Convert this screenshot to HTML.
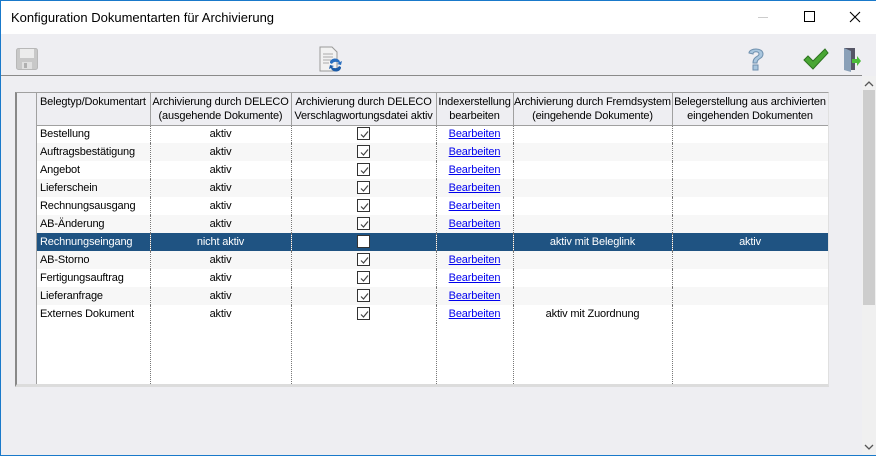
<!DOCTYPE html>
<html><head><meta charset="utf-8"><style>
*{margin:0;padding:0;box-sizing:border-box}
body{width:876px;height:456px;overflow:hidden;background:#eeeef2;font-family:"Liberation Sans",sans-serif;font-size:12px;color:#000;position:relative}
.abs{position:absolute}
#title{left:0;top:0;width:876px;height:34px;background:#fff;border-top:1px solid #1979ca}
#title span{position:absolute;left:11px;top:9px;font-size:13px}
#bl{left:0;top:0;width:1px;height:456px;background:#1979ca}
#bb{left:0;top:455px;width:876px;height:1px;background:#1979ca}
#sep{left:1px;top:75px;width:861px;height:1px;background:#8a8a8a}
#grid{left:15px;top:92px;width:814px;height:295px;background:#fff;border-left:2px solid #888;border-top:1px solid #a0a0a0;border-bottom:3px solid #dcdcdc;border-right:1px solid #e0e0e0;overflow:hidden}
table{position:absolute;left:20px;top:0;border-collapse:collapse;table-layout:fixed;width:791px;font-size:11px;letter-spacing:-0.15px}
td,th{height:18px;padding:0;white-space:nowrap;overflow:hidden;font-weight:normal;text-align:center}
th{height:32px;background:#eeeef2;border-right:1px solid #a0a0a0;border-bottom:1px solid #a0a0a0;line-height:14px}
td{border-right:1px dotted #777}
td.l,th.l{text-align:left;padding-left:3px}
tr.g td{background:#f7f7f7}
tr.s td{background:#1f5382;color:#fff}
a{color:#0000ee;text-decoration:underline}
.cb{display:inline-block;width:13px;height:13px;border:1px solid #333;vertical-align:middle;position:relative;top:-1px;background:#fff}
.cb svg{position:absolute;left:1px;top:1px}
#rh{left:0;top:0;width:20px;height:291px;background:#eeeef2;border-right:1px solid #a0a0a0}
#sb{left:862px;top:76px;width:14px;height:379px;background:#f0f0f0}
#th{left:863px;top:90px;width:12px;height:215px;background:#cdcdcd}
</style></head><body>
<div id="title" class="abs"><span>Konfiguration Dokumentarten für Archivierung</span>
<div class="abs" style="left:758px;top:16px;width:10px;height:1px;background:#ccc"></div>
<div class="abs" style="left:804px;top:10px;width:11px;height:11px;border:1px solid #000"></div>
<svg class="abs" style="left:849px;top:10px" width="12" height="12"><path d="M1 1L11 11M11 1L1 11" stroke="#000" stroke-width="1.1"/></svg>
</div>
<div id="bl" class="abs"></div>
<svg class="abs" style="left:16px;top:48px" width="23" height="22"><rect x="0.5" y="0.5" width="21" height="21" rx="2" fill="#c8c8c8" stroke="#b8b8b8"/><rect x="4" y="1" width="14" height="9" fill="#ececec"/><rect x="6" y="14" width="10" height="7" fill="#e0e0e0"/><rect x="8" y="15" width="3" height="5" fill="#b0b0b0"/></svg>
<svg class="abs" style="left:319px;top:46px" width="24" height="27"><path d="M1 1H13L18 6V25H1Z" fill="#f2f2f2" stroke="#999"/><path d="M4 8H14M4 11H14M4 14H12M4 17H10" stroke="#aaa"/><path d="M11 17a5 4 0 0 1 10-1l2-1-1 4-4-1 2-1a4 3 0 0 0-7 1Z" fill="#2a6fc0"/><path d="M22 21a5 4 0 0 1-10 1l-2 1 1-4 4 1-2 1a4 3 0 0 0 7-1Z" fill="#1c5ca8"/></svg>
<svg class="abs" style="left:746px;top:46px" width="20" height="26"><path d="M3 7C3 2 17 1 17 8C17 13 11 12 11 17H7C7 10 13 11 13 8C13 5 7 5 7 8Z" fill="#a9c6de" stroke="#6e8fad"/><rect x="7" y="19" width="5" height="5" fill="#a9c6de" stroke="#6e8fad"/></svg>
<svg class="abs" style="left:803px;top:48px" width="26" height="22"><path d="M1 12L5 8L10 13L22 1L25 5L10 21Z" fill="#49a634" stroke="#2d7320"/></svg>
<svg class="abs" style="left:842px;top:46px" width="20" height="26"><path d="M2 2H13V24H2Z" fill="#556" /><path d="M2 2L9 5V26L2 24Z" fill="#8aa0b8"/><path d="M10 13H15V10L19 15L15 20V17H10Z" fill="#4cbb3a"/></svg>
<div id="sep" class="abs"></div>
<div id="grid" class="abs">
<div id="rh" class="abs"></div>
<table>
<colgroup><col style="width:113px"><col style="width:141px"><col style="width:145px"><col style="width:77px"><col style="width:159px"><col style="width:156px"></colgroup>
<tr><th class="l" style="vertical-align:top;padding-top:2px">Belegtyp/Dokumentart</th><th>Archivierung durch DELECO<br>(ausgehende Dokumente)</th><th>Archivierung durch DELECO<br>Verschlagwortungsdatei aktiv</th><th>Indexerstellung<br>bearbeiten</th><th>Archivierung durch Fremdsystem<br>(eingehende Dokumente)</th><th>Belegerstellung aus archivierten<br>eingehenden Dokumenten</th></tr>
<tr><td class="l">Bestellung</td><td>aktiv</td><td><span class="cb"><svg width="11" height="11"><path d="M2 5.5L4.5 8L9 2.5" stroke="#444" fill="none" stroke-width="1.2"/></svg></span></td><td><a>Bearbeiten</a></td><td></td><td></td></tr>
<tr class="g"><td class="l">Auftragsbestätigung</td><td>aktiv</td><td><span class="cb"><svg width="11" height="11"><path d="M2 5.5L4.5 8L9 2.5" stroke="#444" fill="none" stroke-width="1.2"/></svg></span></td><td><a>Bearbeiten</a></td><td></td><td></td></tr>
<tr><td class="l">Angebot</td><td>aktiv</td><td><span class="cb"><svg width="11" height="11"><path d="M2 5.5L4.5 8L9 2.5" stroke="#444" fill="none" stroke-width="1.2"/></svg></span></td><td><a>Bearbeiten</a></td><td></td><td></td></tr>
<tr class="g"><td class="l">Lieferschein</td><td>aktiv</td><td><span class="cb"><svg width="11" height="11"><path d="M2 5.5L4.5 8L9 2.5" stroke="#444" fill="none" stroke-width="1.2"/></svg></span></td><td><a>Bearbeiten</a></td><td></td><td></td></tr>
<tr><td class="l">Rechnungsausgang</td><td>aktiv</td><td><span class="cb"><svg width="11" height="11"><path d="M2 5.5L4.5 8L9 2.5" stroke="#444" fill="none" stroke-width="1.2"/></svg></span></td><td><a>Bearbeiten</a></td><td></td><td></td></tr>
<tr class="g"><td class="l">AB-Änderung</td><td>aktiv</td><td><span class="cb"><svg width="11" height="11"><path d="M2 5.5L4.5 8L9 2.5" stroke="#444" fill="none" stroke-width="1.2"/></svg></span></td><td><a>Bearbeiten</a></td><td></td><td></td></tr>
<tr class="s"><td class="l">Rechnungseingang</td><td>nicht aktiv</td><td><span class="cb"></span></td><td></td><td>aktiv mit Beleglink</td><td>aktiv</td></tr>
<tr class="g"><td class="l">AB-Storno</td><td>aktiv</td><td><span class="cb"><svg width="11" height="11"><path d="M2 5.5L4.5 8L9 2.5" stroke="#444" fill="none" stroke-width="1.2"/></svg></span></td><td><a>Bearbeiten</a></td><td></td><td></td></tr>
<tr><td class="l">Fertigungsauftrag</td><td>aktiv</td><td><span class="cb"><svg width="11" height="11"><path d="M2 5.5L4.5 8L9 2.5" stroke="#444" fill="none" stroke-width="1.2"/></svg></span></td><td><a>Bearbeiten</a></td><td></td><td></td></tr>
<tr class="g"><td class="l">Lieferanfrage</td><td>aktiv</td><td><span class="cb"><svg width="11" height="11"><path d="M2 5.5L4.5 8L9 2.5" stroke="#444" fill="none" stroke-width="1.2"/></svg></span></td><td><a>Bearbeiten</a></td><td></td><td></td></tr>
<tr><td class="l">Externes Dokument</td><td>aktiv</td><td><span class="cb"><svg width="11" height="11"><path d="M2 5.5L4.5 8L9 2.5" stroke="#444" fill="none" stroke-width="1.2"/></svg></span></td><td><a>Bearbeiten</a></td><td>aktiv mit Zuordnung</td><td></td></tr>
<tr><td style="height:63px"></td><td></td><td></td><td></td><td></td><td></td></tr>
</table>
</div>
<div id="sb" class="abs"></div>
<div id="th" class="abs"></div>
<svg class="abs" style="left:864px;top:81px" width="10" height="6"><path d="M1 5L5 1L9 5" stroke="#555" fill="none" stroke-width="1.3"/></svg>
<svg class="abs" style="left:864px;top:444px" width="10" height="6"><path d="M1 1L5 5L9 1" stroke="#555" fill="none" stroke-width="1.3"/></svg>
<div id="bb" class="abs"></div>
</body></html>
